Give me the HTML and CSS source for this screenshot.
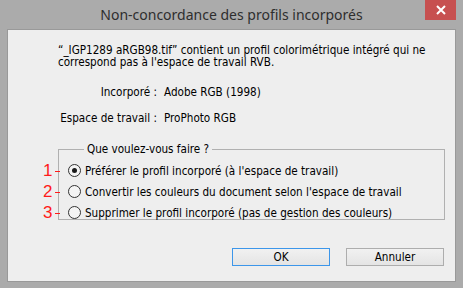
FILE: index.html
```html
<!DOCTYPE html>
<html lang="fr">
<head>
<meta charset="utf-8">
<title>Non-concordance des profils incorporés</title>
<link rel="stylesheet" href="styles.css">
</head>
<body>
<div class="window">
  <div class="titlebar">
    <span class="spacer"></span>
    <span class="title">Non-concordance des profils incorporés</span>
    <span class="close"><svg width="10" height="10" viewBox="0 0 10 10"><path d="M1 1 L9 9 M9 1 L1 9" stroke="#fff" stroke-width="2"/></svg></span>
  </div>
  <div class="client">
    <p class="message">“_IGP1289 aRGB98.tif” contient un profil colorimétrique intégré qui ne correspond pas à l'espace de travail RVB.</p>
    <div class="info">
      <span class="label">Incorporé :</span><span class="value">Adobe RGB (1998)</span>
      <span class="label">Espace de travail :</span><span class="value">ProPhoto RGB</span>
    </div>
    <fieldset class="group">
      <legend>Que voulez-vous faire ?</legend>
      <div class="option"><span class="mark">1</span><span class="radio checked"></span><span>Préférer le profil incorporé (à l'espace de travail)</span></div>
      <div class="option"><span class="mark">2</span><span class="radio"></span><span>Convertir les couleurs du document selon l'espace de travail</span></div>
      <div class="option"><span class="mark">3</span><span class="radio"></span><span>Supprimer le profil incorporé (pas de gestion des couleurs)</span></div>
    </fieldset>
    <div class="buttons">
      <button class="btn default">OK</button>
      <button class="btn">Annuler</button>
    </div>
  </div>
</div>
</body>
</html>
```
FILE: styles.css
```css
* { box-sizing: border-box; }
html, body { margin: 0; padding: 0; }
body {
  background: #ababab;
  width: 463px;
  height: 288px;
  overflow: hidden;
  font-family: "DejaVu Sans Condensed", "DejaVu Sans", sans-serif;
  font-size: 11.6px;
  color: #000;
}
.window { display: flex; flex-direction: column; height: 288px; }
.titlebar {
  height: 29px;
  display: grid;
  grid-template-columns: 1fr auto 1fr;
  align-items: start;
}
.title {
  font-family: "Noto Sans", sans-serif;
  font-size: 14px;
  color: #2e2e2e;
  line-height: 29px;
}
.close {
  justify-self: end;
  margin-right: 7px;
  width: 31px;
  height: 20px;
  background: #c75050;
  display: flex;
  align-items: center;
  justify-content: center;
}
.client {
  margin: 0 7px 6px 7px;
  height: 253px;
  border: 1px solid #999;
  background: #eeeeee;
  padding: 14px 11px 0 50px;
  display: flex;
  flex-direction: column;
}
.message { margin: 0; line-height: 12px; width: 392px; }
.info {
  margin-top: 18px;
  display: grid;
  grid-template-columns: 99px auto;
  column-gap: 7px;
  row-gap: 13px;
  line-height: 13px;
}
.label { text-align: right; }
.group {
  margin: 18px 0 0 0;
  padding: 4px 0 0 9px;
  border: 1px solid #b0b0b0;
  height: 77px;
  width: 387px;
}
.group legend { padding: 0 3px; margin-left: 16px; line-height: 13px; }
.option {
  position: relative;
  display: flex;
  align-items: center;
  gap: 4px;
  height: 21px;
}
.mark {
  position: absolute;
  left: -25px;
  top: 0;
  color: #ff1a1a;
  font-family: "Liberation Sans", sans-serif;
  font-size: 17px;
  line-height: 21px;
}
.mark::after {
  content: "";
  position: absolute;
  left: 12px;
  top: 11px;
  width: 5px;
  height: 1px;
  background: #ff1a1a;
}
.radio {
  width: 13px;
  height: 13px;
  border-radius: 50%;
  border: 1px solid #333;
  background: #f4f4f4;
  display: flex;
  align-items: center;
  justify-content: center;
  flex: none;
}
.radio.checked::after {
  content: "";
  width: 5px;
  height: 5px;
  border-radius: 50%;
  background: #1a1a1a;
}
.buttons {
  margin-top: auto;
  margin-bottom: 15px;
  display: flex;
  justify-content: flex-end;
  gap: 16px;
}
.btn {
  width: 98px;
  height: 18px;
  padding: 0;
  font: inherit;
  color: #000;
  border: 1px solid #adadad;
  background: linear-gradient(#f1f1f1, #e4e4e4);
}
.btn.default { border-color: #3c96ea; }
```
